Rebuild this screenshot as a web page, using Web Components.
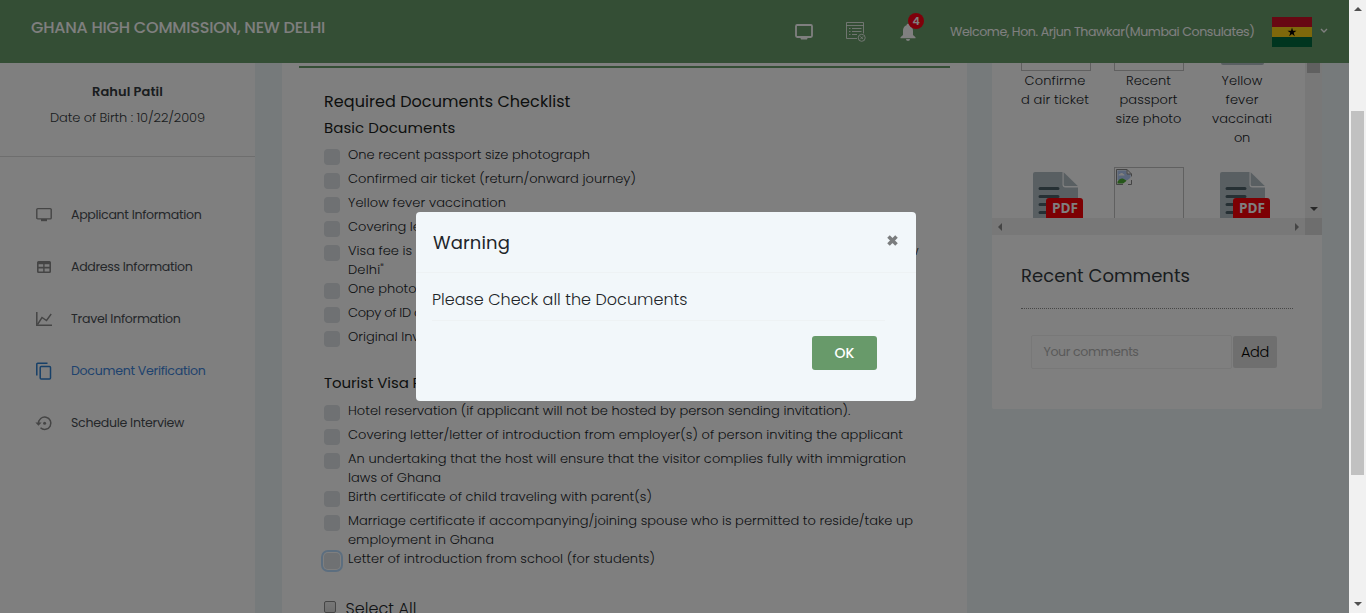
<!DOCTYPE html>
<html lang="en">
<head>
<meta charset="utf-8">
<title>Ghana High Commission, New Delhi</title>
<style>
html,body{margin:0;height:100%;overflow:hidden}
body{font:300 13px/19px Poppins,Inter,"Open Sans",sans-serif;color:#212529;background:#edf4f6}
</style>
</head>
<body>
<visa-app></visa-app>
<script>
const define=(name,html,setup)=>customElements.define(name,class extends HTMLElement{
  connectedCallback(){
    if(this.shadowRoot)return;
    const root=this.attachShadow({mode:'open'});
    root.innerHTML=typeof html==='function'?html(this):html;
    if(setup)setup(this,root);
  }
});
const T=(w,t)=>`<fit-text w="${w}">${t}</fit-text>`;

const ICONS={
  tv:'<path d="M1.8 1.6h12.4a1 1 0 0 1 1 1v8.3a1 1 0 0 1-1 1H1.8a1 1 0 0 1-1-1V2.600a1 1 0 0 1 1-1z" fill="none" stroke="currentColor" stroke-width="1.400"/><path d="M5 12h6v2.200H5z" fill="currentColor"/>',
  table:'<path fill="currentColor" fill-rule="evenodd" d="M2.500 2h11A1.500 1.500 0 0 1 15 3.500v9a1.500 1.500 0 0 1-1.500 1.500h-11A1.500 1.500 0 0 1 1 12.500v-9A1.500 1.500 0 0 1 2.500 2zM2.600 5.200v2.600h4.600V5.200zm6 0v2.600h4.800V5.200zm-6 4.200v3.100h4.600V9.400zm6 0v3.100h4.800V9.400z"/>',
  chart:'<path d="M.8 1v13.200H16" fill="none" stroke="currentColor" stroke-width="1.500"/><path d="M1.500 13.500 6 6.500l4.500 3L15.200 3" fill="none" stroke="currentColor" stroke-width="1.400"/>',
  copy:'<path d="M.8 12.500V1.200a.9.900 0 0 1 .9-.9H11.500" fill="none" stroke="currentColor" stroke-width="1.500"/><rect x="4.200" y="3.600" width="10.300" height="12.500" rx="1" fill="none" stroke="currentColor" stroke-width="1.500"/>',
  history:'<path d="M2.500 8.500a6.200 6.200 0 1 1 2 4.300" fill="none" stroke="currentColor" stroke-width="1.500"/><path d="M-.6 7.600h6.200L2.500 10.700z" fill="currentColor"/><circle cx="8.600" cy="8.200" r="1.500" fill="currentColor"/>'
};

define('visa-app',`
<style>
:host{display:flex;height:613px;width:1366px}
.page{width:1349px;height:613px;display:flex;flex-direction:column;position:relative;overflow:hidden}
.cols{display:flex;height:550px}
side-menu{margin-right:27px}
doc-card{margin-right:25px}
.shade{position:absolute;inset:0;background:rgba(0,0,0,.5)}
warn-dialog{position:absolute;left:416px;top:212px}
</style>
<div class="page">
  <top-bar></top-bar>
  <div class="cols"><side-menu></side-menu><doc-card></doc-card><right-panel></right-panel></div>
  <div class="shade"></div>
  <warn-dialog></warn-dialog>
</div>
<page-scroll></page-scroll>`);

define('top-bar',`
<style>
:host{display:flex;height:63px;background:#689c6a;color:#fff;box-sizing:border-box;padding-left:31px;align-items:center;font-weight:400;font-size:12.600px}
.brand{font-size:16px;font-weight:500;margin:-8px auto 0 0}
svg{display:block}
.bell{position:relative;margin-right:34px}
.badge{position:absolute;left:8px;top:-10px;width:16px;height:16px;border-radius:50%;background:#ff0014;font:600 11px/16px Poppins,Inter,sans-serif;text-align:center}
</style>
<div class="brand">${T(294,'GHANA HIGH COMMISSION, NEW DELHI')}</div>
<svg width="18" height="16" viewBox="0 0 18 16" style="margin-right:33px"><rect x="1" y="1" width="16" height="12" rx="1.200" fill="none" stroke="#fff" stroke-width="1.800"/><path d="M5 13h8l-1 2.500H6z" fill="#fff"/></svg>
<svg width="20" height="20" viewBox="0 0 20 20" style="margin-right:34px" fill="none" stroke="#fff" stroke-opacity=".8"><path d="M11 16.500H.5V.5h17v11M.5 3.500h17M3 6.500h1.500M6 6.500h9.500M3 9.500h1.500M6 9.500h9.500M3 12.500h1.500M6 12.500h5"/><circle cx="15.700" cy="15.800" r="3.500"/><path d="m14.300 14.400 2.800 2.800m0-2.800-2.800 2.800"/></svg>
<div class="bell"><svg width="16" height="18" viewBox="0 0 16 18"><path fill="#fff" d="M8 .8c.9 0 1.400.6 1.400 1.400C12 3 13 5.200 13 8v4l2.500 2.300v.9H.5v-.9L3 12V8c0-2.800 1-5 3.600-5.800C6.600 1.400 7.100.8 8 .8zM6 15.900h4a2 2 0 0 1-4 0z"/></svg><span class="badge">4</span></div>
${T(304.500,'Welcome, Hon. Arjun Thawkar(Mumbai Consulates)')}
<svg width="40" height="30" viewBox="0 0 40 30" style="margin:0 8px 0 17.500px"><path fill="#ce1126" d="M0 0h40v10H0z"/><path fill="#fcd116" d="M0 10h40v10H0z"/><path fill="#006b3f" d="M0 20h40v10H0z"/><path d="m20 10.500 1 3.300h3.500l-2.800 2 1.100 3.400-2.800-2.100-2.800 2.100 1.100-3.400-2.800-2H19z"/></svg>
<svg width="8" height="6" viewBox="0 0 8 6" style="margin:-1px 21px 0 0"><path d="m1 1 3 3 3-3" fill="none" stroke="#fff" stroke-width="1.400"/></svg>`);

define('side-menu',`
<style>
:host{display:block;width:255px;background:#fff;color:#343a40}
.who{height:93px;box-sizing:content-box;border-bottom:1px solid #dcdcdc;display:flex;flex-direction:column;align-items:center;line-height:26px}
.who b{font-weight:600;margin-top:16px}
nav{padding-top:31px}
</style>
<div class="who"><b>${T(71,'Rahul Patil')}</b><span>${T(155,'Date of Birth : 10/22/2009')}</span></div>
<nav>
<menu-item icon="tv">${T(130.500,'Applicant Information')}</menu-item>
<menu-item icon="table">${T(121.500,'Address Information')}</menu-item>
<menu-item icon="chart">${T(109.500,'Travel Information')}</menu-item>
<menu-item icon="copy" active>${T(134.500,'Document Verification')}</menu-item>
<menu-item icon="history">${T(113,'Schedule Interview')}</menu-item>
</nav>`);

define('menu-item',el=>`
<style>
:host{display:flex;align-items:center;height:52px;padding-left:36px;color:#4a4f55;font-weight:400;font-size:12.600px}
:host([active]){color:#3f86dc}
svg{color:#8a8a8a;margin-right:19px;overflow:visible;margin-top:1px}
:host([active]) svg{color:#2f80d0}
</style>
<svg width="16" height="16" viewBox="0 0 16 16">${ICONS[el.getAttribute('icon')]}</svg><slot></slot>`);

define('check-row',`
<style>
:host{display:flex;min-height:24px;color:#212529}
i{flex:none;width:16px;height:16px;margin:4px 8px 0 0;border-radius:4px;background:#dee2e6}
:host([focused]) i{background:#dee2e6;box-shadow:0 0 0 1px #fff,0 0 0 3px #b9dcff}
.t{display:flex;flex-direction:column;align-items:flex-start;flex:1}
</style><i></i><div class="t"><slot></slot></div>`);

define('doc-card',`
<style>
:host{display:block;width:685px;background:#fff;box-sizing:border-box;padding:3px 17px 0;overflow:hidden}
.rule{height:2px;background:#689c6a}
.body{padding:21px 25px 0}
h3,h4{margin:0;font-weight:400;color:#1b1e21;font-size:16px;line-height:26px}
h4{font-size:15px;line-height:26px;margin-bottom:4px}
h4.two{margin:19px 0 5px}
.gap{display:flex;width:571px;justify-content:space-between}
.all{display:flex;margin-top:22px;height:30px;font-size:16px;align-items:flex-start}
.all i{width:10px;height:10px;border:1px solid #8a8a8a;border-radius:2px;background:linear-gradient(#eee,#ddd);margin:6px 9.500px 0 0}
.all fit-text{margin-top:4px}
</style>
<div class="rule"></div>
<div class="body">
<h3>${T(246.500,'Required Documents Checklist')}</h3>
<h4>${T(131.500,'Basic Documents')}</h4>
<check-row>${T(242,'One recent passport size photograph')}</check-row>
<check-row>${T(288,'Confirmed air ticket (return/onward journey)')}</check-row>
<check-row>${T(158,'Yellow fever vaccination')}</check-row>
<check-row>${T(95,'Covering letter')}</check-row>
<check-row><span class="gap">${T(64,'Visa fee is')}${T(29,'New')}</span>${T(36,'Delhi"')}</check-row>
<check-row>${T(117,'One photocopy of')}</check-row>
<check-row>${T(95,'Copy of ID card')}</check-row>
<check-row>${T(112,'Original Invitation')}</check-row>
<h4 class="two">${T(192,'Tourist Visa Requirements')}</h4>
<check-row>${T(502.500,'Hotel reservation (if applicant will not be hosted by person sending invitation).')}</check-row>
<check-row>${T(555,'Covering letter/letter of introduction from employer(s) of person inviting the applicant')}</check-row>
<check-row>${T(558,'An undertaking that the host will ensure that the visitor complies fully with immigration')}${T(93,'laws of Ghana')}</check-row>
<check-row>${T(304,'Birth certificate of child traveling with parent(s)')}</check-row>
<check-row>${T(565,'Marriage certificate if accompanying/joining spouse who is permitted to reside/take up')}${T(146,'employment in Ghana')}</check-row>
<check-row focused>${T(307,'Letter of introduction from school (for students)')}</check-row>
<div class="all"><i></i>${T(71,'Select All')}</div>
</div>`);

define('pdf-icon',`
<style>:host{display:block;height:51px;width:70px}svg{display:block}</style>
<svg width="70" height="51" viewBox="0 0 70 51">
<path fill="#b3bfc5" d="M15 5h27.500v12.500a3 3 0 0 0 3 3H58V55H13V7a2 2 0 0 1 2-2z"/><path fill="#b3bfc5" d="M43.700 5.200 57.800 19H45.200a1.500 1.500 0 0 1-1.500-1.500z"/>
<path stroke="#4c6069" stroke-width="3" stroke-linecap="round" d="M20 21.500h18M20 29.500h18M20 37.500h18M20 45.500h18"/>
<rect x="26" y="31" width="37" height="24" rx="3" fill="#fb0007"/>
<text x="32" y="46.200" textLength="26" lengthAdjust="spacingAndGlyphs" font-family="Open Sans,sans-serif" font-weight="700" font-size="13.500" fill="#fff">PDF</text></svg>`);

define('broken-image',`
<style>:host{display:block;width:68px;height:68px;border:1px solid #c0c0c0}svg{display:block;margin:1px 0 0 1px}</style>
<svg width="16" height="16" viewBox="0 0 16 16"><path d="M.5.5H11L15.500 5v10.500H.5z" fill="#fff"/><path d="M1.500 1.500h9V5h4v6H1.500z" fill="#b4cdf7"/><path d="M2.500 6.500c0-1.200 1-1.500 1.500-1.500.6-1.600 3-1.400 3.200.1 1 0 1.300.7 1.300 1.400z" fill="#fff"/><path d="M1.500 14.500v-1.800C4 8.500 7 8.800 9.500 11l1.500 1-3.500 2.500z" fill="#4eae35"/><path d="M.5 15.500V.5H11L15.500 5v2.500M.5 15.500H7M11 .5V5h4.500M15.500 11v4.500H12" fill="none" stroke="#888"/><path d="m8.500 16 7.500-5.500V7.500L7 14.800z" fill="#fff"/></svg>`);

define('right-panel',`
<style>
:host{display:block;width:330px;height:346px;background:#fff;border-radius:0 0 2px 2px}
.pane{display:grid;grid-template-columns:313px 17px;grid-template-rows:155px 17px}
.docs{overflow:hidden;display:grid;grid-template-columns:70px 70px 70px;column-gap:23.500px;padding-left:28.500px;align-content:start}
.r1{height:104px;display:flex;flex-direction:column;align-items:center}
.r1 fit-text{position:relative;left:-.5px}
pdf-icon{position:relative;left:-.5px}
.stub{width:68px;height:7px;border:solid #c0c0c0;border-width:0 1px 1px;margin-bottom:0}
.stub.p{width:43px;height:2px;border:0;background:#b3bfc5;border-radius:0 0 2px 2px;margin-bottom:6px}
.v,.h{background:#f1f1f1;display:flex;justify-content:space-between;align-items:center}
.v{flex-direction:column}
.v i{width:13px;height:10px;background:#c1c1c1}
.v svg{margin-bottom:7px}
.h svg{margin:0 6px}
.c{background:#dcdcdc}
.com{padding:27px 29px 0}
h2{margin:0;font-weight:400;font-size:18px;line-height:28px;color:#343a40}
.dot{border-bottom:1px dotted #8c8c8c;height:18px}
.add{display:flex;margin:26px 0 0 10px;align-items:center}
.in{box-sizing:border-box;width:201px;height:34px;border:1px solid #f0f0f0;border-radius:2px;color:#b4b4b4;padding:6px 11.500px;font-weight:400;font-size:12.600px}
.bt{width:44px;height:32px;margin-left:1px;background:#dfdfdf;border:0;border-radius:2px;text-align:center;line-height:32px;font-size:14.500px;font-weight:300;color:#000}
</style>
<div class="pane">
<div class="docs">
<div class="r1"><div class="stub"></div>${T(61,'Confirme')}${T(68,'d air ticket')}</div>
<div class="r1"><div class="stub"></div>${T(45,'Recent')}${T(58,'passport')}${T(66,'size photo')}</div>
<div class="r1"><div class="stub p"></div>${T(41,'Yellow')}${T(33,'fever')}${T(60,'vaccinati')}${T(16,'on')}</div>
<pdf-icon></pdf-icon><broken-image></broken-image><pdf-icon></pdf-icon>
</div>
<div class="v"><i></i><svg width="8" height="4"><path d="M0 0h8L4 4z" fill="#505050"/></svg></div>
<div class="h"><svg width="4" height="8"><path d="M4 0v8L0 4z" fill="#8a8a8a"/></svg><svg width="4" height="8"><path d="M0 0v8l4-4z" fill="#8a8a8a"/></svg></div>
<div class="c"></div>
</div>
<div class="com"><h2>${T(169,'Recent Comments')}</h2><div class="dot"></div>
<div class="add"><div class="in">${T(95,'Your comments')}</div><div class="bt">${T(28,'Add')}</div></div></div>`);

define('warn-dialog',`
<style>
:host{display:block;width:500px;height:189px;background:#f2f7fa;border-radius:4px;box-sizing:border-box;color:#212529}
header{display:flex;justify-content:space-between;height:60px;border-bottom:1px solid #eef2f4;padding:0 17px;font-size:18px;font-weight:400;align-items:center}
svg{margin-top:-4px}
.b{padding:17px 16px 0;font-size:16px;line-height:20px}
hr{border:0;border-top:1px solid #eef2f4;margin:10px 15px 15px 0}
.ok{margin-left:380px;width:65px;height:34px;border-radius:3px;background:#689a6a;color:#fff;text-align:center;font-size:14px;line-height:34px;font-weight:500}
</style>
<header>${T(77,'Warning')}<svg width="13" height="13" viewBox="0 0 13 13"><path d="m2.500 2.500 8 8m0-8-8 8" stroke="#7b7d7e" stroke-width="3.600"/></svg></header>
<div class="b">${T(255.500,'Please Check all the Documents')}<hr><div class="ok">${T(20,'OK')}</div></div>`);

define('page-scroll',`
<style>
:host{display:flex;flex-direction:column;align-items:center;width:17px;height:613px;background:#f1f1f1}
i{width:13px;height:364px;background:#c1c1c1;margin:100px 0 auto}
svg{display:block;flex:none}svg:first-of-type{margin-top:7px}svg:last-of-type{margin-bottom:7px}
</style>
<svg width="8" height="4"><path d="M0 4h8L4 0z" fill="#505050"/></svg><i></i><svg width="8" height="4"><path d="M0 0h8L4 4z" fill="#505050"/></svg>`);

/* A single line of text, tracked so that it fills the width in its "w" attribute. */
customElements.define('fit-text',class extends HTMLElement{
  connectedCallback(){
    if(this.shadowRoot)return;
    const root=this.attachShadow({mode:'open'});
    root.innerHTML='<style>:host{display:inline-block;white-space:nowrap;vertical-align:top;line-height:inherit}</style><slot></slot>';
    const w=+this.getAttribute('w'),n=this.textContent.length;
    const natural=this.getBoundingClientRect().width;
    this.style.letterSpacing=((w-natural)/n).toFixed(3)+'px';
  }
});
</script>
</body>
</html>
